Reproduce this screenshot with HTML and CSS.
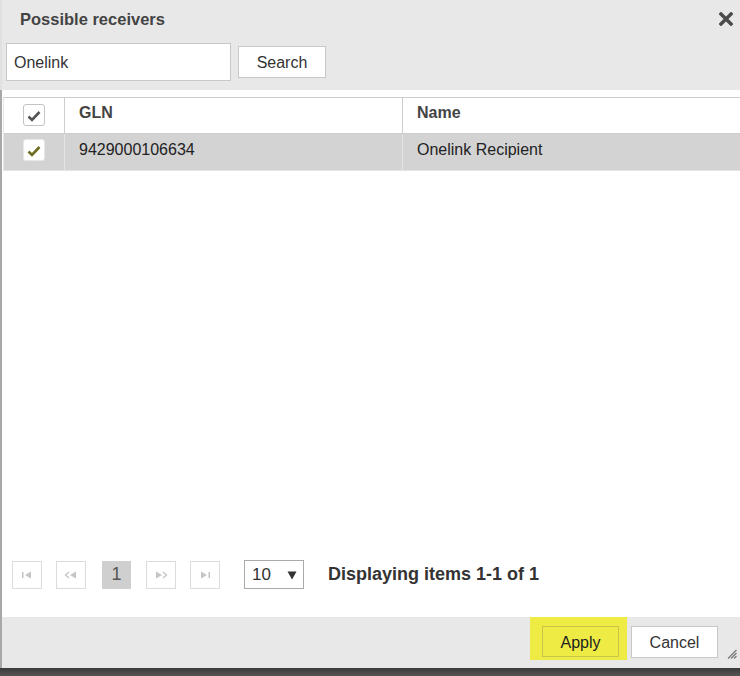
FILE: index.html
```html
<!DOCTYPE html>
<html>
<head>
<meta charset="utf-8">
<link rel="stylesheet" href="styles.css">
</head>
<body>
<div class="dialog">
  <div class="titlebar">
    <div class="title-row">
      <span class="title">Possible receivers</span>
      <svg class="close" width="14" height="14" viewBox="0 0 14 14"><path d="M2 2 L12 12 M12 2 L2 12" stroke="#4a4a4a" stroke-width="3.4" stroke-linecap="square"/></svg>
    </div>
    <div class="search-row">
      <div class="input">Onelink</div>
      <div class="btn search-btn">Search</div>
    </div>
  </div>
  <div class="main">
    <div class="grid">
      <div class="row head">
        <div class="cell chk"><span class="box"><svg width="14" height="12" viewBox="0 0 14 12"><path d="M1.5 6.5 L5 10 L12.5 2" fill="none" stroke="#555" stroke-width="2.6"/></svg></span></div>
        <div class="cell gln">GLN</div>
        <div class="cell name">Name</div>
      </div>
      <div class="row data">
        <div class="cell chk"><span class="box"><svg width="14" height="12" viewBox="0 0 14 12"><path d="M1.5 6.5 L5 10 L12.5 2" fill="none" stroke="#6e6a1e" stroke-width="2.6"/></svg></span></div>
        <div class="cell gln">9429000106634</div>
        <div class="cell name">Onelink Recipient</div>
      </div>
    </div>
    <div class="pager">
      <div class="pbtn"><svg width="12" height="8" viewBox="0 0 12 8"><rect x="1" y="1" width="1.5" height="6" fill="#c4c4c4"/><path d="M4 4 L10 0.5 L10 7.5 Z" fill="#c4c4c4"/></svg></div>
      <div class="pbtn"><svg width="14" height="8" viewBox="0 0 14 8"><path d="M5 1 L1.5 4 L5 7" fill="none" stroke="#c4c4c4" stroke-width="1.3"/><path d="M6 4 L12 0.5 L12 7.5 Z" fill="#c4c4c4"/></svg></div>
      <div class="pbtn current">1</div>
      <div class="pbtn"><svg width="14" height="8" viewBox="0 0 14 8"><path d="M2 0.5 L8 4 L2 7.5 Z" fill="#c4c4c4"/><path d="M9 1 L12.5 4 L9 7" fill="none" stroke="#c4c4c4" stroke-width="1.3"/></svg></div>
      <div class="pbtn"><svg width="12" height="8" viewBox="0 0 12 8"><path d="M2 0.5 L8 4 L2 7.5 Z" fill="#c4c4c4"/><rect x="9.5" y="1" width="1.5" height="6" fill="#c4c4c4"/></svg></div>
      <div class="select"><span>10</span><svg width="10" height="10" viewBox="0 0 10 10"><path d="M0.5 1.5 L9.5 1.5 L5 9.5 Z" fill="#333"/></svg></div>
      <div class="info">Displaying items 1-1 of 1</div>
    </div>
  </div>
  <div class="footer">
    <div class="apply-wrap"><div class="btn apply">Apply</div></div>
    <div class="btn cancel">Cancel</div>
    <svg class="grip" width="10" height="10" viewBox="0 0 10 10"><path d="M9.5 1 L1 9.5 M9.5 4 L4 9.5 M9.5 7 L7 9.5" stroke="#777" stroke-width="1.2"/></svg>
  </div>
  <div class="edge"></div>
</div>
</body>
</html>
```

FILE: styles.css
```css
html, body {
  margin: 0;
  padding: 0;
  background: #fff;
}
body {
  font-family: "Liberation Sans", Arial, sans-serif;
  color: #222;
}
.dialog {
  width: 740px;
  height: 676px;
  display: flex;
  flex-direction: column;
  box-sizing: border-box;
  border-left: 2px solid #a8a8a8;
  position: relative;
}
.titlebar {
  background: #e8e8e8;
  height: 90px;
  box-sizing: border-box;
  padding: 0 0 0 4px;
  margin-left: -2px;
  border-left: 2px solid #e0e0e0;
}
.title-row {
  height: 38px;
  display: flex;
  align-items: center;
  justify-content: space-between;
  padding: 0 7px 0 14px;
}
.title {
  font-size: 16.5px;
  font-weight: bold;
  color: #444;
}
.close {
  margin-bottom: 1px;
}
.search-row {
  display: flex;
  align-items: center;
  gap: 6px;
  margin-top: 5px;
}
.input {
  width: 225px;
  height: 38px;
  box-sizing: border-box;
  background: #fff;
  border: 1px solid #c8c8c8;
  font-size: 16px;
  color: #333;
  padding: 2px 0 0 7px;
  display: flex;
  align-items: center;
}
.btn {
  background: #fff;
  border: 1px solid #c8c8c8;
  box-sizing: border-box;
  font-size: 16px;
  color: #333;
  display: flex;
  align-items: center;
  justify-content: center;
}
.search-btn {
  width: 88px;
  height: 32px;
  margin-left: 1px;
  padding-top: 2px;
}
.main {
  flex: 1;
  background: #fff;
  display: flex;
  flex-direction: column;
  justify-content: space-between;
  padding-top: 7px;
}
.grid {
  margin-left: 1px;
  border-top: 1px solid #cdcdcd;
  border-left: 1px solid #e6e6e6;
}
.row {
  display: grid;
  grid-template-columns: 61px 338px 1fr;
}
.row.head {
  height: 35px;
  border-bottom: 1px solid #cdcdcd;
}
.row.data {
  height: 36px;
  background: #d3d3d3;
  border-bottom: 1px solid #e4e4e4;
}
.cell {
  display: flex;
  align-items: center;
  font-size: 16px;
  color: #222;
  padding-left: 14px;
  box-sizing: border-box;
}
.row.head .cell {
  padding-bottom: 5px;
}
.row.data .cell {
  padding-bottom: 4px;
}
.cell.chk {
  padding-left: 0;
  justify-content: center;
  border-right: 1px solid #cdcdcd;
}
.cell.gln {
  border-right: 1px solid #cdcdcd;
}
.row.data .cell.chk, .row.data .cell.gln {
  border-right-color: #e4e4e4;
}
.row.head .cell {
  font-weight: bold;
  color: #444;
}
.row.head .cell.chk {
  padding-bottom: 2px;
}
.box {
  width: 20px;
  height: 20px;
  border: 1px solid #c4c4c4;
  border-radius: 3px;
  background: #fff;
  display: flex;
  align-items: center;
  justify-content: center;
  margin-right: 1px;
}
.row.data .box {
  border-color: #e8e8e8;
}
.box svg {
  margin-top: 2px;
}
.pager {
  display: flex;
  align-items: center;
  padding: 0 0 28px 10px;
}
.pbtn {
  width: 30px;
  height: 28px;
  box-sizing: border-box;
  border: 1px solid #dcdcdc;
  display: flex;
  align-items: center;
  justify-content: center;
  margin-right: 14px;
  font-size: 18px;
  color: #555;
}
.pbtn.current {
  background: #cfcfcf;
  border-color: #cfcfcf;
  margin-left: 2px;
  margin-right: 15px;
  width: 29px;
}
.select {
  margin-left: 10px;
  width: 60px;
  height: 29px;
  box-sizing: border-box;
  border: 1px solid #aaa;
  display: flex;
  align-items: center;
  justify-content: space-between;
  padding: 0 6px 0 7px;
  font-size: 17px;
  color: #333;
}
.info {
  margin-left: 24px;
  font-size: 18px;
  font-weight: bold;
  color: #333;
  margin-bottom: 1px;
}
.footer {
  height: 51px;
  background: #e8e8e8;
  display: flex;
  align-items: flex-start;
  justify-content: flex-end;
  padding-right: 22px;
  position: relative;
}
.apply-wrap {
  background: #eeec44;
  width: 97px;
  height: 43px;
  box-sizing: border-box;
  display: flex;
  justify-content: center;
  padding: 9px 0 0 4px;
  margin-right: 4px;
}
.apply {
  width: 77px;
  height: 31px;
  background: #eeec44;
  border-color: #c8c64a;
  color: #222;
  padding-top: 2px;
}
.cancel {
  width: 87px;
  height: 32px;
  margin-top: 9px;
  padding-top: 2px;
}
.grip {
  position: absolute;
  right: 3px;
  bottom: 9px;
}
.edge {
  height: 8px;
  background: linear-gradient(#3a3a3a, #555);
  margin-left: -2px;
}
```
